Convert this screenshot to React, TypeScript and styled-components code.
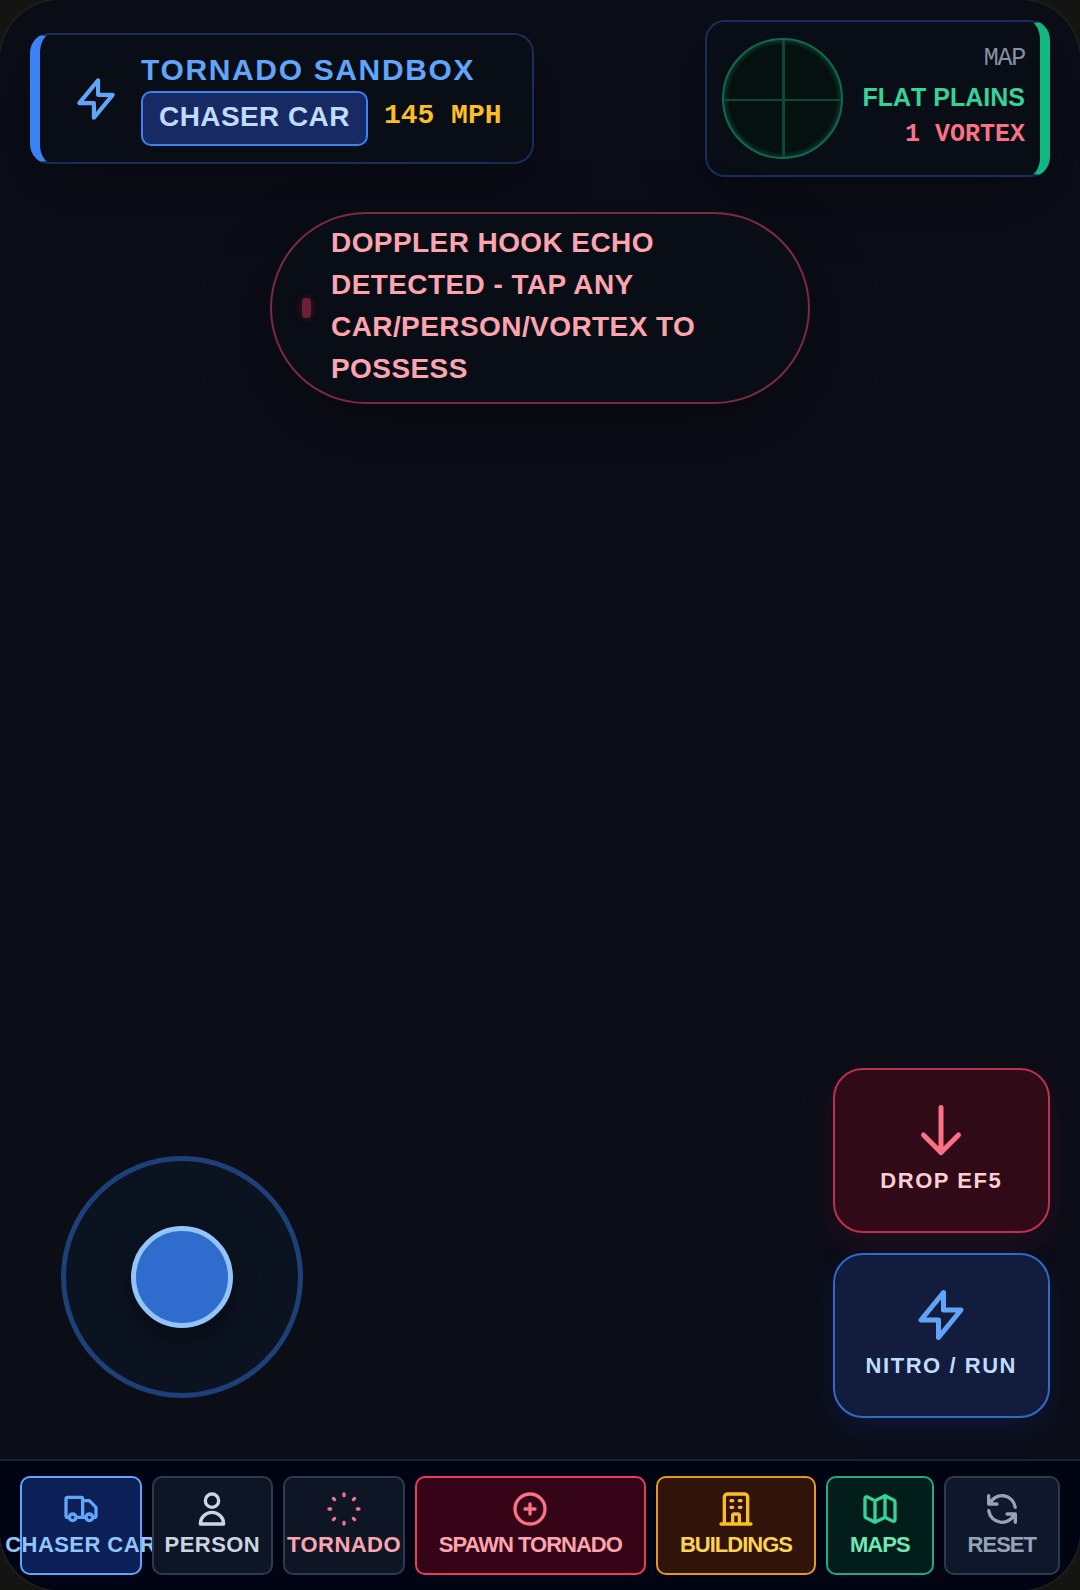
import React from 'react';
import styled, { createGlobalStyle, css } from 'styled-components';

const SANS = `"Liberation Sans", Arial, sans-serif`;
const MONO = `"Liberation Mono", "Courier New", monospace`;

const GlobalStyle = createGlobalStyle`
  *, *::before, *::after { box-sizing: border-box; }
  body { margin: 0; background: #141413; font-family: ${SANS}; }
  button { font-family: inherit; cursor: pointer; }
`;

const Screen = styled.div`
  display: flex;
  flex-direction: column;
  min-height: 100vh;
  overflow: hidden;
  border-radius: 60px;
  background: #0b0d17;
  box-shadow: 0 0 0 2px #1d1d1b;
`;

const Header = styled.header`
  display: flex;
  justify-content: space-between;
  align-items: center;
  padding: 20px 30px 0;
`;

const panel = css`
  display: flex;
  align-items: center;
  gap: 20px;
  border: 2px solid #1a2d5a;
  border-radius: 20px;
  background: #080d16;
  box-shadow: 0 24px 60px rgba(0, 0, 0, 0.25);
`;

const TitlePanel = styled.section`
  ${panel}
  padding: 16px 30px 16px 31px;
  border-left: 10px solid #3b82f6;
`;

const MapPanel = styled.section`
  ${panel}
  padding: 16px 15px;
  border-right: 10px solid #10b981;
`;

const Icon = styled.svg<{ $size: number; $color: string }>`
  flex: none;
  display: block;
  width: ${(p) => p.$size}px;
  height: ${(p) => p.$size}px;
  fill: none;
  stroke: ${(p) => p.$color};
  stroke-width: 2;
  stroke-linecap: round;
  stroke-linejoin: round;
`;

const Title = styled.h1`
  margin: 0 0 2px;
  font-size: 30px;
  line-height: 38px;
  font-weight: 700;
  letter-spacing: 0.055em;
  color: #60a5fa;
`;

const StatusRow = styled.div`
  display: flex;
  align-items: center;
  gap: 16px;
`;

const Badge = styled.span`
  padding: 3px 16px 7px;
  border: 2px solid #3b82f6;
  border-radius: 10px;
  background: #172a63;
  color: #bfdbfe;
  font-size: 28px;
  line-height: 41px;
  font-weight: 700;
  letter-spacing: 0.015em;
`;

const Speed = styled.span`
  padding-bottom: 7px;
  font-family: ${MONO};
  font-size: 28px;
  line-height: 41px;
  font-weight: 700;
  color: #fbbf24;
`;

const Radar = styled.svg`
  flex: none;
  width: 121px;
  height: 121px;
`;

const MapInfo = styled.div`
  display: flex;
  flex-direction: column;
  align-items: flex-end;
  padding-bottom: 4px;
  font-size: 25px;
  line-height: 38px;
  font-weight: 700;
`;

const MapCaption = styled.span`
  font-family: ${MONO};
  font-weight: 400;
  letter-spacing: -0.05em;
  color: #8792a5;
`;

const MapName = styled.span`
  font-kerning: none;
  color: #34d399;
`;

const VortexCount = styled.span`
  font-family: ${MONO};
  color: #fb7185;
`;

const Alert = styled.div`
  display: flex;
  align-items: center;
  gap: 20px;
  width: 50%;
  margin: 35px auto 0;
  padding: 8px 30px;
  border: 2px solid #7c2941;
  border-radius: 96px;
  background: #080d16;
  box-shadow: 0 24px 70px rgba(0, 0, 0, 0.3);
`;

const AlertDot = styled.span`
  flex: none;
  width: 9px;
  height: 20px;
  border-radius: 4px;
  background: #6a2038;
  box-shadow: 0 0 8px rgba(190, 30, 60, 0.4);
`;

const AlertText = styled.p`
  margin: 0;
  padding-bottom: 4px;
  font-size: 28px;
  line-height: 42px;
  font-weight: 700;
  letter-spacing: 0.015em;
  color: #fda4af;
`;

const Controls = styled.main`
  flex: 1;
  display: flex;
  justify-content: space-between;
  align-items: flex-end;
  padding: 41px 30px;
`;

const Joystick = styled.div`
  display: grid;
  place-items: center;
  width: 242px;
  height: 242px;
  margin: 0 31px 20px;
  border: 5px solid #1e4078;
  border-radius: 50%;
  background: #0c1320;
`;

const Knob = styled.button`
  width: 102px;
  height: 102px;
  padding: 0;
  border: 5px solid #93c5fd;
  border-radius: 50%;
  background: #306ccd;
  box-shadow: 0 12px 24px rgba(0, 0, 0, 0.4);
`;

const Actions = styled.div`
  display: flex;
  flex-direction: column;
  gap: 20px;
`;

type Tone = { bg: string; edge: string; text: string; icon: string };

const ActionButton = styled.button<{ $tone: Tone; $glow: string }>`
  display: flex;
  flex-direction: column;
  align-items: center;
  gap: 4px;
  padding: 30px 31px 33px;
  border: 2px solid ${(p) => p.$tone.edge};
  border-radius: 30px;
  background: ${(p) => p.$tone.bg};
  box-shadow: 0 12px 30px ${(p) => p.$glow};
  color: ${(p) => p.$tone.text};
  font-size: 22px;
  line-height: 34px;
  font-weight: 700;
  letter-spacing: 0.07em;
  white-space: nowrap;
`;

const Toolbar = styled.nav`
  display: flex;
  gap: 10px;
  padding: 15px 20px;
  border-top: 2px solid #1d2430;
  background: #010413;
`;

const ToolButton = styled.button<{ $tone: Tone; $fit?: boolean }>`
  display: flex;
  flex-direction: column;
  align-items: center;
  flex: ${(p) => (p.$fit ? 'none' : '1 1 0')};
  min-width: 0;
  padding: 11px ${(p) => (p.$fit ? 22 : 0)}px 12px;
  border: 2px solid ${(p) => p.$tone.edge};
  border-radius: 10px;
  background: ${(p) => p.$tone.bg};
  color: ${(p) => p.$tone.text};
  font-size: 22px;
  line-height: 32px;
  font-weight: 700;
  letter-spacing: ${(p) => (p.$fit ? '-0.045em' : '0.02em')};
  white-space: nowrap;
`;

const paths = {
  bolt: 'M13 10V3L4 14h7v7l9-11h-7z',
  down: 'M19 14l-7 7m0 0l-7-7m7 7V3',
  truck:
    'M13 16V6a1 1 0 00-1-1H4a1 1 0 00-1 1v10a1 1 0 001 1h1m8-1a1 1 0 01-1 1H9m4-1V8a1 1 0 011-1h2.586a1 1 0 01.707.293l3.414 3.414a1 1 0 01.293.707V16a1 1 0 01-1 1h-1m-6-1a1 1 0 001 1h1M5 17a2 2 0 104 0m-4 0a2 2 0 114 0m6 0a2 2 0 104 0m-4 0a2 2 0 114 0',
  person: 'M16 7a4 4 0 11-8 0 4 4 0 018 0zM12 14a7 7 0 00-7 7h14a7 7 0 00-7-7z',
  swirl:
    'M12 3v1m0 16v1m9-9h-1M4 12H3m15.364 6.364l-.707-.707M6.343 6.343l-.707-.707m12.728 0l-.707.707M6.343 17.657l-.707.707',
  plus: 'M12 9v3m0 0v3m0-3h3m-3 0H9m12 0a9 9 0 11-18 0 9 9 0 0118 0z',
  building:
    'M19 21V5a2 2 0 00-2-2H7a2 2 0 00-2 2v16m14 0h2m-2 0h-5m-9 0H3m2 0h5M9 7h1m-1 4h1m4-4h1m-1 4h1m-5 10v-5a1 1 0 011-1h2a1 1 0 011 1v5m-4 0h4',
  map: 'M9 20l-5.447-2.724A1 1 0 013 16.382V5.618a1 1 0 011.447-.894L9 7m0 13l6-3m-6 3V7m6 10l4.553 2.276A1 1 0 0021 18.382V7.618a1 1 0 00-.553-.894L15 4m0 13V4m0 0L9 7',
  refresh:
    'M4 4v5h.582m15.356 2A8.001 8.001 0 004.582 9m0 0H9m11 11v-5h-.581m0 0a8.003 8.003 0 01-15.357-2m15.357 2H15',
};

type IconName = keyof typeof paths;

function Glyph({ name, size, color }: { name: IconName; size: number; color: string }) {
  return (
    <Icon viewBox="0 0 24 24" $size={size} $color={color} aria-hidden="true">
      <path d={paths[name]} />
    </Icon>
  );
}

const tools: { label: string; icon: IconName; fit?: boolean; tone: Tone }[] = [
  { label: 'CHASER CAR', icon: 'truck', tone: { bg: '#0c2057', edge: '#60a5fa', text: '#93c5fd', icon: '#60a5fa' } },
  { label: 'PERSON', icon: 'person', tone: { bg: '#0e1626', edge: '#2f3a4b', text: '#cbd5e1', icon: '#cbd5e1' } },
  { label: 'TORNADO', icon: 'swirl', tone: { bg: '#0e1626', edge: '#2f3a4b', text: '#fda4af', icon: '#fb7185' } },
  { label: 'SPAWN TORNADO', icon: 'plus', fit: true, tone: { bg: '#350416', edge: '#e63e5f', text: '#fda4af', icon: '#fb7185' } },
  { label: 'BUILDINGS', icon: 'building', fit: true, tone: { bg: '#30140a', edge: '#e39a1e', text: '#fcd34d', icon: '#fbbf24' } },
  { label: 'MAPS', icon: 'map', fit: true, tone: { bg: '#021d1a', edge: '#20ac80', text: '#6ee7b7', icon: '#34d399' } },
  { label: 'RESET', icon: 'refresh', fit: true, tone: { bg: '#0f172a', edge: '#2f3a4b', text: '#94a3b8', icon: '#94a3b8' } },
];

const dropTone: Tone = { bg: '#310a18', edge: '#bd304f', text: '#fecdd3', icon: '#fb7185' };
const nitroTone: Tone = { bg: '#121c3d', edge: '#3369c8', text: '#bfdbfe', icon: '#60a5fa' };

export default function App() {
  return (
    <>
      <GlobalStyle />
      <Screen>
        <Header>
          <TitlePanel>
            <Glyph name="bolt" size={50} color="#60a5fa" />
            <div>
              <Title>TORNADO SANDBOX</Title>
              <StatusRow>
                <Badge>CHASER CAR</Badge>
                <Speed>145 MPH</Speed>
              </StatusRow>
            </div>
          </TitlePanel>
          <MapPanel>
            <Radar viewBox="0 0 121 121" aria-hidden="true">
              <defs>
                <radialGradient id="radar-glow">
                  <stop offset="0.9" stopColor="#05110f" />
                  <stop offset="1" stopColor="#083a2d" />
                </radialGradient>
              </defs>
              <circle cx="60.5" cy="60.5" r="59.5" fill="url(#radar-glow)" stroke="#10694f" strokeWidth="2" />
              <path d="M61.5 2v117" stroke="#0b4838" strokeWidth="3" />
              <path d="M2 62h117" stroke="#0b4838" strokeWidth="2" />
            </Radar>
            <MapInfo>
              <MapCaption>MAP</MapCaption>
              <MapName>FLAT PLAINS</MapName>
              <VortexCount>1 VORTEX</VortexCount>
            </MapInfo>
          </MapPanel>
        </Header>

        <Alert role="status">
          <AlertDot />
          <AlertText>DOPPLER HOOK ECHO DETECTED - TAP ANY CAR/PERSON/VORTEX TO POSSESS</AlertText>
        </Alert>

        <Controls>
          <Joystick>
            <Knob type="button" aria-label="Steer" />
          </Joystick>
          <Actions>
            <ActionButton type="button" $tone={dropTone} $glow="rgba(136, 19, 55, 0.2)">
              <Glyph name="down" size={60} color={dropTone.icon} />
              DROP EF5
            </ActionButton>
            <ActionButton type="button" $tone={nitroTone} $glow="rgba(30, 64, 175, 0.18)">
              <Glyph name="bolt" size={60} color={nitroTone.icon} />
              NITRO / RUN
            </ActionButton>
          </Actions>
        </Controls>

        <Toolbar>
          {tools.map((tool) => (
            <ToolButton key={tool.label} type="button" $tone={tool.tone} $fit={tool.fit}>
              <Glyph name={tool.icon} size={40} color={tool.tone.icon} />
              {tool.label}
            </ToolButton>
          ))}
        </Toolbar>
      </Screen>
    </>
  );
}
